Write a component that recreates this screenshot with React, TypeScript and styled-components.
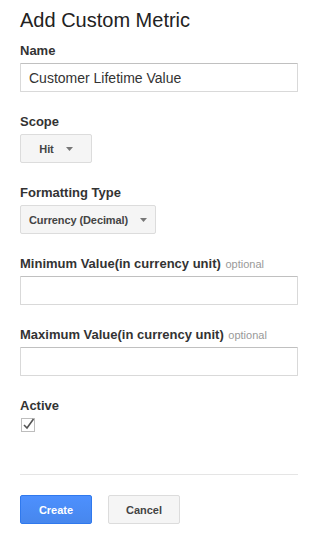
import styled, { createGlobalStyle } from 'styled-components';

const GlobalStyle = createGlobalStyle`
  html, body {
    margin: 0;
    padding: 0;
    background: #ffffff;
  }
  body {
    font-family: Arial, "Liberation Sans", sans-serif;
    color: #222222;
  }
`;

const Caret = () => (
  <svg width="7" height="4" viewBox="0 0 7 4">
    <path d="M0 0 L7 0 L3.5 4 Z" fill="#777777" />
  </svg>
);

const CheckMark = () => (
  <svg width="17" height="17" viewBox="0 0 17 17">
    <rect x="0.5" y="2.5" width="13" height="13" fill="#ffffff" stroke="#bdbdbd" />
    <path d="M3 9 L6 12 L12.5 3" fill="none" stroke="#555555" strokeWidth="1.6" />
  </svg>
);

const App = () => {
  return (
    <Page>
      <GlobalStyle />
      <Title>Add Custom Metric</Title>

      <Field>
        <Label>Name</Label>
        <TextInput type="text" defaultValue="Customer Lifetime Value" />
      </Field>

      <Field>
        <Label>Scope</Label>
        <SelectButton type="button">
          Hit
          <Caret />
        </SelectButton>
      </Field>

      <Field>
        <Label>Formatting Type</Label>
        <SelectButton type="button">
          Currency (Decimal)
          <Caret />
        </SelectButton>
      </Field>

      <Field>
        <Label>
          Minimum Value(in currency unit) <Optional>optional</Optional>
        </Label>
        <TextInput type="text" />
      </Field>

      <Field>
        <Label>
          Maximum Value(in currency unit) <Optional>optional</Optional>
        </Label>
        <TextInput type="text" />
      </Field>

      <Field>
        <Label>Active</Label>
        <CheckBox>
          <CheckMark />
        </CheckBox>
      </Field>

      <Divider />

      <Actions>
        <ActionButton type="button" $primary>
          Create
        </ActionButton>
        <ActionButton type="button">Cancel</ActionButton>
      </Actions>
    </Page>
  );
};

export default App;

const Page = styled.div`
  width: 278px;
  padding: 8px 21px 12px 20px;
  display: flex;
  flex-direction: column;
`;

const Title = styled.h1`
  margin: 0 0 11px;
  font-size: 20px;
  line-height: 24px;
  font-weight: normal;
  color: #222222;
`;

const Field = styled.div`
  display: flex;
  flex-direction: column;
  align-items: flex-start;
  margin-bottom: 22px;
`;

const Label = styled.div`
  font-size: 13px;
  line-height: 16px;
  font-weight: bold;
  color: #333333;
  margin-bottom: 4px;
`;

const Optional = styled.span`
  font-size: 11px;
  font-weight: normal;
  color: #999999;
  margin-left: 1px;
`;

const TextInput = styled.input`
  box-sizing: border-box;
  width: 278px;
  height: 29px;
  margin: 0;
  padding: 0 8px;
  border: 1px solid #d9d9d9;
  border-top-color: #c0c0c0;
  border-radius: 1px;
  font-family: Arial, "Liberation Sans", sans-serif;
  font-size: 14px;
  color: #333333;
  outline: none;
`;

const SelectButton = styled.button`
  box-sizing: border-box;
  min-width: 72px;
  height: 29px;
  margin: 0;
  padding: 0 8px;
  display: inline-flex;
  align-items: center;
  justify-content: center;
  gap: 12px;
  background: #f5f5f5;
  border: 1px solid #dcdcdc;
  border-radius: 2px;
  font-family: Arial, "Liberation Sans", sans-serif;
  font-size: 11px;
  font-weight: bold;
  letter-spacing: -0.1px;
  color: #444444;
  cursor: default;
`;

const CheckBox = styled.div`
  display: flex;
  margin-left: 1px;
  margin-top: -2px;
  height: 17px;
`;

const Divider = styled.hr`
  width: 278px;
  margin: 19px 0 20px;
  border: 0;
  border-top: 1px solid #e5e5e5;
`;

const Actions = styled.div`
  display: flex;
  gap: 16px;
`;

const ActionButton = styled.button<{ $primary?: boolean }>`
  box-sizing: border-box;
  width: 72px;
  height: 29px;
  margin: 0;
  padding: 0 8px;
  border-radius: 2px;
  font-family: Arial, "Liberation Sans", sans-serif;
  font-size: 11px;
  font-weight: bold;
  background: ${(p) => (p.$primary ? 'linear-gradient(#4d90fe, #4787ed)' : '#f5f5f5')};
  border: 1px solid ${(p) => (p.$primary ? '#3079ed' : '#dcdcdc')};
  color: ${(p) => (p.$primary ? '#ffffff' : '#444444')};
  cursor: default;
`;
